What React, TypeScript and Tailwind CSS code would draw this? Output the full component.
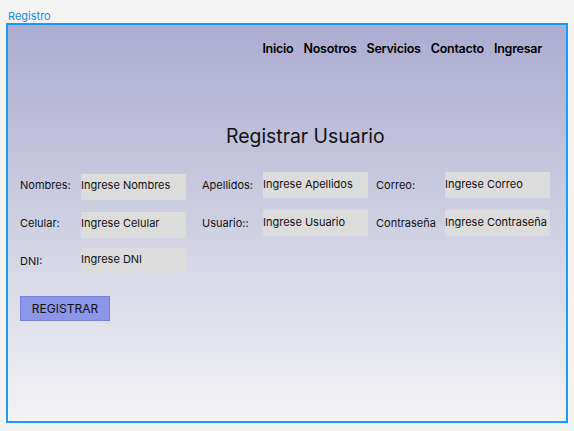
export default function App() {
    return (
        <div className="w-[574px] h-[431px] bg-[#f4f4f4] px-[6px] font-['Inter',sans-serif]">
            <div className="h-[23px] pl-[2px] pt-[9px] text-[11px] leading-[14px] text-[#1a8cf0]">Registro</div>
            <div className="w-[562px] h-[400px] border-2 border-[#1a9aff] bg-gradient-to-b from-[#acacd0] to-[#f3f3f5]">
                {/* nav */}
                <nav className="flex justify-end gap-[10px] pr-[24px] pt-[17px] text-[12.5px] leading-[14px] font-semibold text-black tracking-[-0.25px]">
                    <span>Inicio</span>
                    <span>Nosotros</span>
                    <span>Servicios</span>
                    <span>Contacto</span>
                    <span>Ingresar</span>
                </nav>
                <h1 className="mt-[68px] pl-[218px] text-[19.4px] leading-[24px] text-[#111]">Registrar Usuario</h1>
                {/* form */}
                <div className="mt-[18px] flex pl-[12px] text-[11px] leading-[14px] text-[#111]">
                    <div className="flex flex-col w-[182px]">
                        <div className="flex items-center h-[38px]">
                            <span className="w-[61px]">Nombres:</span>
                            <div className="mt-[4px] w-[105px] h-[26px] bg-[#dcdcdc] pt-1">Ingrese Nombres</div>
                        </div>
                        <div className="flex items-center h-[38px]">
                            <span className="w-[61px]">Celular:</span>
                            <div className="mt-[4px] w-[105px] h-[26px] bg-[#dcdcdc] pt-1">Ingrese Celular</div>
                        </div>
                        <div className="flex items-center h-[38px]">
                            <span className="w-[61px]">DNI:</span>
                            <div className="w-[105px] h-[26px] bg-[#dcdcdc] pt-1 self-center">Ingrese DNI</div>
                        </div>
                    </div>
                    <div className="flex flex-col w-[174px]">
                        <div className="flex items-center h-[38px]">
                            <span className="w-[61px]">Apellidos:</span>
                            <div className="w-[105px] h-[26px] bg-[#dcdcdc] pt-[5px]">Ingrese Apellidos</div>
                        </div>
                        <div className="flex items-center h-[38px]">
                            <span className="w-[61px]">Usuario::</span>
                            <div className="w-[105px] h-[26px] bg-[#dcdcdc] pt-[5px]">Ingrese Usuario</div>
                        </div>
                    </div>
                    <div className="flex flex-col">
                        <div className="flex items-center h-[38px]">
                            <span className="w-[69px]">Correo:</span>
                            <div className="w-[105px] h-[26px] bg-[#dcdcdc] pt-[5px]">Ingrese Correo</div>
                        </div>
                        <div className="flex items-center h-[38px]">
                            <span className="w-[69px]">Contraseña</span>
                            <div className="w-[105px] h-[26px] bg-[#dcdcdc] pt-[5px] whitespace-nowrap">Ingrese Contraseña</div>
                        </div>
                    </div>
                </div>
                <button className="ml-[12px] mt-[16px] w-[90px] h-[25px] bg-[#8c96e8] border border-[#7483e0] text-[12px] text-[#111] leading-[14px]">
                    REGISTRAR
                </button>
            </div>
        </div>
    );
}
